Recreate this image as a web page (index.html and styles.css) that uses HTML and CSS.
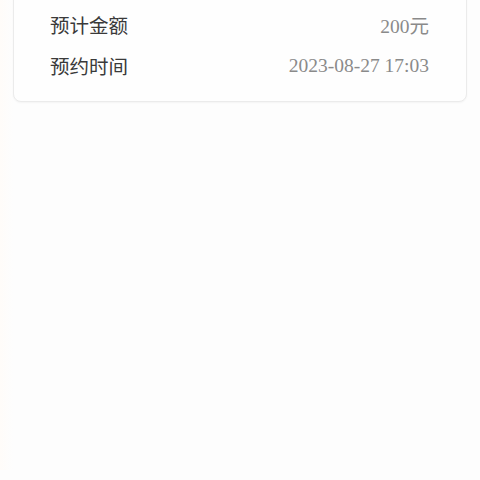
FILE: index.html
```html
<!DOCTYPE html>
<html lang="zh-CN">
<head>
    <meta charset="UTF-8">
    <meta name="viewport" content="width=device-width, initial-scale=1.0">
    <title>预约详情</title>
    <link rel="stylesheet" href="styles.css">
</head>
<body>

<div class="page">
    <div class="info-card">
        <div class="info-row">
            <span class="label">预计金额</span>
            <span class="value">200元</span>
        </div>
        <div class="info-row">
            <span class="label">预约时间</span>
            <span class="value">2023-08-27 17:03</span>
        </div>
    </div>
</div>

</body>
</html>
```

FILE: styles.css
```css
html, body {
    margin: 0;
    padding: 0;
    background: #fdfdfd;
    height: 100%;
}
.page {
    padding: 0 13px;
    background: linear-gradient(to right, #fffcf9 0, #fdfdfd 13px);
    min-height: 100%;
    box-sizing: border-box;
}
.info-card {
    margin-top: -10px;
    padding: 13px 37px 15px 36px;
    background: #fefefe;
    border: 1px solid #ebebeb;
    border-radius: 8px;
    box-shadow: 0 1px 2px rgba(0, 0, 0, 0.04);
}
.info-row {
    display: flex;
    justify-content: space-between;
    align-items: center;
    height: 41px;
}
.label {
    font-family: "Noto Sans CJK SC", "Noto Sans", sans-serif;
    font-size: 19.5px;
    font-weight: 400;
    color: #3a3a3a;
}
.value {
    font-family: "Liberation Serif", "Noto Sans CJK SC", serif;
    font-size: 19.5px;
    color: #8a8a8a;
}
```
